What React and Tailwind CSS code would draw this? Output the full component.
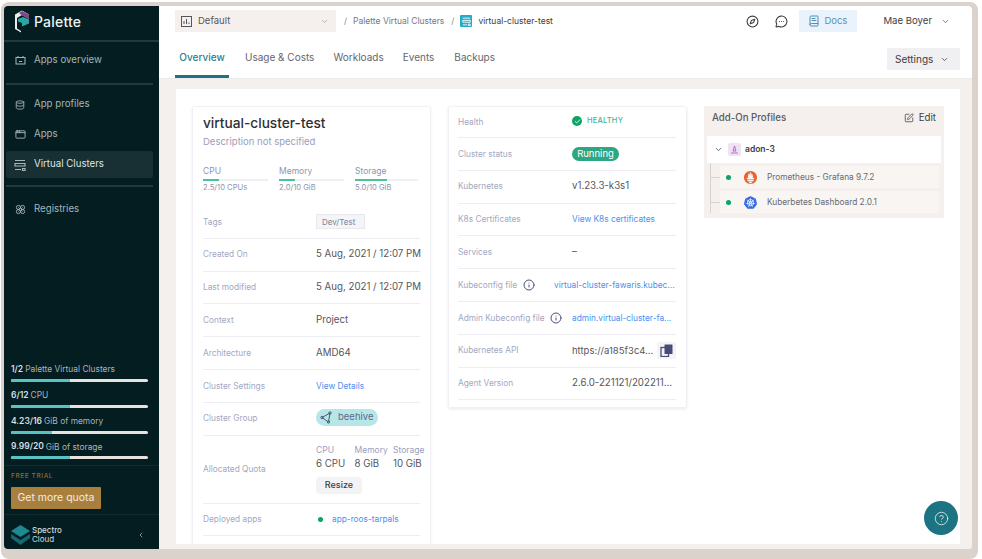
import React from "react";
import { ChevronDown, ChevronLeft, Compass, MessageCircleMore, BookText, SquarePen, Info, CircleHelp, Check, Database, AppWindow, Flower } from "lucide-react";
import { SiPrometheus, SiKubernetes } from "react-icons/si";

function Bar({ label, strong, pct }) {
  return (
    <div className="h-[25.7px] pl-[7px] pr-[11px]">
      <div className="h-[15px] flex items-center text-[8.4px] text-[#a9b4b6] whitespace-nowrap">
        <span className="font-semibold text-[#d9dfe0] mr-[2px] text-[8.5px]">{strong}</span>{label}
      </div>
      <div className="mt-[2px] h-[3px] rounded-full bg-[#e8e2df] overflow-hidden">
        <div className="h-full bg-[#59c3c3]" style={{ width: pct }} />
      </div>
    </div>
  );
}

function NavItem({ icon, label, active }) {
  return (
    <div className={`mx-[2px] w-[147px] h-[27px] flex items-center rounded-[2px] ${active ? "bg-[#182f33] text-[#dfe5e6]" : "text-[#a8b5b7]"}`}>
      <div className="w-[28px] flex justify-center text-[#a8b5b7]">{icon}</div>
      <span className="text-[9.7px] whitespace-nowrap">{label}</span>
    </div>
  );
}

function Row({ label, children, h = "h-[32.8px]", lw = "w-[113px]" }) {
  return (
    <div className={`${h} flex items-center border-b border-[#eeedf3]`}>
      <div className={`${lw} shrink-0 text-[8.3px] text-[#a2a8bf] whitespace-nowrap`}>{label}</div>
      <div className="min-w-0 flex-1 text-[9.7px] text-[#55565c] whitespace-nowrap">{children}</div>
    </div>
  );
}

function Usage({ label, value, pct, w }) {
  return (
    <div className={w}>
      <div className="text-[8.5px] leading-[10px] text-[#8f93ae]">{label}</div>
      <div className="mt-[3px] h-[2px] bg-[#f0f0f2]">
        <div className="h-full bg-[#48c597]" style={{ width: pct }} />
      </div>
      <div className="mt-[2px] text-[7.6px] leading-[10px] text-[#8f93ae] whitespace-nowrap">{value}</div>
    </div>
  );
}

function Logo() {
  return (
    <svg width="16" height="23" viewBox="0 0 16 23">
      <path d="M1 4.5 L8 0.5 L15 4.5 L15 9 L8 5 L3 8 L3 18.5 L7 21 L7 22.5 L1 19 Z" fill="#e9edee" />
      <path d="M5 3 L8 1 L15 4.5 L15 9 L8 5.5 Z" fill="#7b4a8c" />
      <path d="M4 9 L9 7 L15 9.5 L15 13.5 L8 16.5 L8 13 L4 11.5 Z" fill="#2fa3a3" />
    </svg>
  );
}

function SpectroLogo() {
  return (
    <svg width="19" height="20" viewBox="0 0 19 20">
      <path d="M9.5 0 L19 6 L9.5 12 L0 6 Z" fill="#1d8a92" />
      <path d="M0 9 L9.5 15 L19 9 L19 13 L9.5 20 L0 13 Z" fill="#14686f" />
    </svg>
  );
}

function ClusterIcon({ size = 12 }) {
  return (
    <svg width={size} height={size} viewBox="0 0 12 12" fill="none" stroke="currentColor" strokeWidth="1.2">
      <path d="M1 1.5 H11 M1 4.5 H11 V7 H1 Z M1 10.5 H7 M8.5 9.5 H11 V11.5 H8.5 Z" />
    </svg>
  );
}

function TvIcon() {
  return (
    <svg width="11" height="11" viewBox="0 0 11 11" fill="none" stroke="currentColor" strokeWidth="1">
      <rect x="1" y="2.5" width="9" height="6.5" /><path d="M3 2.5V1 M8 2.5V1 M4 6.5H7" />
    </svg>
  );
}

function CopyFilled() {
  return (
    <svg width="13" height="13" viewBox="0 0 13 13" fill="none">
      <rect x="1" y="3.5" width="7.5" height="9" fill="none" stroke="#4a4a78" strokeWidth="1.3" />
      <rect x="4.5" y="0.5" width="8" height="9.5" rx=".5" fill="#4a4a78" />
    </svg>
  );
}

export default function App() {
  return (
    <div className="w-[982px] h-[559px] bg-white overflow-hidden font-['Inter',sans-serif] pl-[1px] pt-[2px]">
      <div className="w-[977px] h-[557px] rounded-[8px] bg-[#dbd2cc] pl-[3px] pt-[4px]">
        <div className="w-[968px] h-[543px] rounded-[4px] bg-white flex overflow-hidden">
          {/* sidebar */}
          <aside className="w-[155px] shrink-0 bg-[#031d21] flex flex-col">
            <div className="h-[36px] flex items-center pl-[10px] pb-[4px] border-b-2 border-[#223a3d]">
              <Logo />
              <span className="ml-[4px] text-[14px] font-medium text-[#eef2f2] tracking-[0.2px]">Palette</span>
            </div>
            <div className="pt-[5px]">
              <NavItem label="Apps overview" icon={<TvIcon />} />
            </div>
            <div className="mt-[9px] mb-[6px] mx-[2px] w-[147px] h-[2px] bg-[#223a3d]" />
            <NavItem label="App profiles" icon={<Database size={10} />} />
            <div className="h-[3px]" />
            <NavItem label="Apps" icon={<AppWindow size={11} />} />
            <div className="h-[3px]" />
            <NavItem label="Virtual Clusters" active icon={<ClusterIcon />} />
            <div className="mt-[7px] mb-[9px] mx-[2px] w-[147px] h-[2px] bg-[#223a3d]" />
            <NavItem label="Registries" icon={<Flower size={11} />} />
            <div className="flex-1" />
            <div>
              <Bar strong="1/2" label="Palette Virtual Clusters" pct="43%" />
              <Bar strong="6/12" label="CPU" pct="43%" />
              <Bar strong="4.23/16" label="GiB of memory" pct="30%" />
              <Bar strong="9.99/20" label="GiB of storage" pct="43%" />
            </div>
            <div className="border-t border-[#12292d] pl-[7px]">
              <div className="pt-[6px] h-[21px] text-[6.5px] tracking-[0.6px] font-medium text-[#a0662a]">FREE TRIAL</div>
              <div className="w-[90px] h-[22px] flex items-center justify-center rounded-[1px] bg-[#a97f3d] text-[10.5px] text-[#f3ece0]">Get more quota</div>
            </div>
            <div className="mt-[5px] border-t border-[#12292d] h-[35px] pt-[6px] flex items-center pl-[7px] pr-[14px]">
              <SpectroLogo />
              <div className="ml-[2px] text-[8px] leading-[9.5px] text-[#d5dcdd]">
                <div className="font-medium">Spectro</div>
                <div>Cloud</div>
              </div>
              <ChevronLeft size={8} className="ml-auto text-[#c0c8c9]" />
            </div>
          </aside>
          {/* main */}
          <main className="flex-1 min-w-0 flex flex-col">
            <header className="h-[30px] flex items-center pl-[16px] pr-[22px] shrink-0">
              <div className="w-[161px] h-[22px] flex items-center bg-[#f5f0ee] px-[6px] text-[9.5px] text-[#55565c]">
                <svg width="11" height="11" viewBox="0 0 11 11" fill="none" stroke="#55565c" strokeWidth="1"><rect x="0.5" y="0.5" width="10" height="10" /><path d="M3 8V5 M5.5 8V3 M8 8V6.5" /></svg>
                <span className="ml-[6px]">Default</span>
                <ChevronDown size={9} className="ml-auto mr-[1px] text-[#a5a5a8]" />
              </div>
              <span className="ml-[8px] text-[8.5px] text-[#8a8a90]">/</span>
              <span className="ml-[6px] text-[8.5px] text-[#77777d]">Palette Virtual Clusters</span>
              <span className="ml-[7px] text-[8.5px] text-[#8a8a90]">/</span>
              <div className="ml-[6px] w-[12px] h-[12px] rounded-[1px] bg-[#25a9c9] flex items-center justify-center text-white"><ClusterIcon size={9} /></div>
              <span className="ml-[6px] text-[8.5px] text-[#3d3d42]">virtual-cluster-test</span>
              <Compass size={13} className="ml-auto text-[#3d3d42]" />
              <MessageCircleMore size={13} className="ml-[16px] text-[#3d3d42]" />
              <div className="ml-[11px] w-[58px] h-[22px] bg-[#eaf2fb] flex items-center pl-[9px] text-[9.5px] text-[#5a93b5]">
                <BookText size={12} className="text-[#4f8fb2]" />
                <span className="ml-[4px]">Docs</span>
              </div>
              <span className="ml-[26px] text-[9.6px] text-[#3d3d42]">Mae Boyer</span>
              <ChevronDown size={9} className="ml-[9px] text-[#55565c]" />
            </header>
            <div className="h-[43px] shrink-0 flex items-end pl-[16px] pr-[12px] border-b border-[#eeeae7] text-[10px] text-[#66666c]">
              <div className="w-[54px] h-[38px] flex items-center justify-center border-b-[3px] border-[#1d7180] text-[#2e7f8d] font-medium">Overview</div>
              <div className="ml-[16px] h-[38px] flex items-center pb-[3px]">Usage &amp; Costs</div>
              <div className="ml-[19px] h-[38px] flex items-center pb-[3px]">Workloads</div>
              <div className="ml-[19px] h-[38px] flex items-center pb-[3px]">Events</div>
              <div className="ml-[20px] h-[38px] flex items-center pb-[3px]">Backups</div>
              <div className="ml-auto self-start mt-[12px] w-[73px] h-[22px] bg-[#f0eff2] flex items-center pl-[8px] text-[10px] text-[#3d3d42]">
                Settings
                <ChevronDown size={9} className="ml-[7px]" />
              </div>
            </div>
            <div className="flex-1 min-h-0 bg-[#f4f0ee] pl-[17px] pr-[12px] pt-[10px] pb-[5px]">
              <div className="h-full bg-white relative flex items-start gap-[17px] pl-[16px] pt-[17px] overflow-hidden">
                {/* card 1 */}
                <section className="w-[239px] h-[460px] shrink-0 rounded-[2px] border border-[#f0f0f6] shadow-[0_1px_3px_rgba(40,40,90,0.08)] pl-[10px] pr-[10px] pt-[8px]">
                  <div className="text-[13.7px] leading-[17px] font-medium text-[#2f2f33] whitespace-nowrap">virtual-cluster-test</div>
                  <div className="mt-[4px] text-[9.5px] leading-[12px] text-[#9a9dbb]">Description not specified</div>
                  <div className="mt-[18px] flex">
                    <Usage label="CPU" value="2.5/10 CPUs" pct="25%" w="w-[65px] mr-[11px]" />
                    <Usage label="Memory" value="2.0/10 GiB" pct="25%" w="w-[65px] mr-[11px]" />
                    <Usage label="Storage" value="5.0/10 GiB" pct="50%" w="w-[63px]" />
                  </div>
                  <div className="mt-[13px]">
                    <Row label="Tags">
                      <span className="inline-flex w-[49px] h-[15px] items-center pl-[5px] bg-[#f5f5f8] border border-[#e8e8ee] text-[8px] text-[#7d8096]">Dev/Test</span>
                    </Row>
                    <Row label="Created On">5 Aug, 2021 / 12:07 PM</Row>
                    <Row label="Last modified">5 Aug, 2021 / 12:07 PM</Row>
                    <Row label="Context">Project</Row>
                    <Row label="Architecture">AMD64</Row>
                    <Row label="Cluster Settings"><span className="text-[#4b8ff0] text-[8.3px]">View Details</span></Row>
                    <Row label="Cluster Group">
                      <span className="inline-flex items-center w-[62px] h-[17px] rounded-full bg-[#b7e6e6] pl-[4px] text-[9.5px] text-[#5d6a8a]">
                        <svg width="13" height="13" viewBox="0 0 13 13" fill="none" stroke="#4d5a80" strokeWidth="1"><path d="M2 6.5 L10 2 L8.5 11 Z" /><circle cx="2" cy="6.5" r="1.2" /><circle cx="10" cy="2" r="1.2" /><circle cx="8.5" cy="11" r="1.2" /></svg>
                        <span className="ml-[5px]">beehive</span>
                      </span>
                    </Row>
                    <Row label="Allocated Quota" h="h-[68px]">
                      <div className="flex text-[8.5px] leading-[11px] text-[#9a9dbb]">
                        <span className="w-[38.5px] shrink-0">CPU</span><span className="w-[38.5px] shrink-0">Memory</span><span className="shrink-0">Storage</span>
                      </div>
                      <div className="mt-[2px] flex text-[9.7px] leading-[12px] text-[#55565c]">
                        <span className="w-[38.5px] shrink-0">6 CPU</span><span className="w-[38.5px] shrink-0">8 GiB</span><span className="shrink-0">10 GiB</span>
                      </div>
                      <div className="mt-[7px] w-[46px] h-[17px] rounded-[4px] bg-[#f3f2f5] flex items-center justify-center text-[9px] font-medium text-[#3d3d42]">Resize</div>
                    </Row>
                    <Row label="Deployed apps">
                      <span className="inline-flex items-center text-[8.3px] text-[#4b8ff0]">
                        <span className="ml-[2px] w-[5px] h-[5px] rounded-full bg-[#0ba463]" />
                        <span className="ml-[9px]">app-roos-tarpals</span>
                      </span>
                    </Row>
                  </div>
                </section>
                {/* card 2 */}
                <section className="w-[239px] h-[302px] shrink-0 rounded-[2px] border border-[#f0f0f6] shadow-[0_1px_3px_rgba(40,40,90,0.1)] pl-[9px] pr-[10px]">
                  <Row label="Health" h="h-[31px]" lw="w-[114px]">
                    <span className="inline-flex items-center text-[7.5px] font-medium tracking-[0.2px] text-[#4bb398]">
                      <span className="w-[10px] h-[10px] rounded-full bg-[#0ba463] flex items-center justify-center text-white"><Check size={7} strokeWidth={3} /></span>
                      <span className="ml-[5px] -mt-[2px]">HEALTHY</span>
                    </span>
                  </Row>
                  <Row label="Cluster status" lw="w-[114px]">
                    <span className="inline-flex items-center justify-center w-[47px] h-[14px] rounded-full bg-[#2ea583] text-[9.5px] text-white">Running</span>
                  </Row>
                  <Row label="Kubernetes" lw="w-[114px]">v1.23.3-k3s1</Row>
                  <Row label="K8s Certificates" lw="w-[114px]"><span className="text-[#4b8ff0] text-[8.3px]">View K8s certificates</span></Row>
                  <Row label="Services" lw="w-[114px]">–</Row>
                  <Row label={<span className="inline-flex items-center">Kubeconfig file<Info size={12} className="ml-[6px] text-[#4d4d80]" /></span>} lw="w-[96px]">
                    <span className="text-[#4b8ff0] text-[8.3px]">virtual-cluster-fawaris.kubec...</span>
                  </Row>
                  <Row label={<span className="inline-flex items-center">Admin Kubeconfig file<Info size={12} className="ml-[6px] text-[#4d4d80]" /></span>} lw="w-[114px]">
                    <span className="text-[#4b8ff0] text-[8.3px]">admin.virtual-cluster-fa...</span>
                  </Row>
                  <Row label="Kubernetes API" lw="w-[114px]">
                    <span className="flex items-center">
                      <span className="text-[9.5px] w-[87px]">https://a185f3c4...</span>
                      <span className="w-[20px] h-[17px] bg-[#f4f4f7] flex items-center justify-center"><CopyFilled /></span>
                    </span>
                  </Row>
                  <Row label="Agent Version" lw="w-[114px]">2.6.0-221121/202211...</Row>
                </section>
                {/* card 3 */}
                <section className="w-[240px] h-[112px] shrink-0 bg-[#f5f0ed] rounded-[1px] px-[3px]">
                  <div className="h-[30px] flex items-center pb-[6px] pl-[5px] pr-[5px] text-[9.7px] text-[#55565c]">
                    <span className="font-medium text-[#5a5a60]">Add-On Profiles</span>
                    <SquarePen size={10} className="ml-auto text-[#4d4d52]" />
                    <span className="ml-[5px] text-[#3d3d42]">Edit</span>
                  </div>
                  <div className="h-[27px] bg-white flex items-center pl-[7px] text-[8.5px] font-semibold text-[#3d3d42]">
                    <ChevronDown size={9} />
                    <span className="ml-[5px] w-[13px] h-[13px] rounded-[2px] bg-[#efe3f3] flex items-center justify-center">
                      <svg width="9" height="9" viewBox="0 0 9 9" fill="none" stroke="#9b59b6" strokeWidth=".8"><path d="M4.5 1 L3 6 H6 Z M1 8 H8" /></svg>
                    </span>
                    <span className="ml-[4px]">adon-3</span>
                  </div>
                  <div className="border-l border-[#d8d2cd] ml-[3px] pt-[3px] pr-[2px] flex flex-col gap-[3px]">
                    {[["Prometheus - Grafana 9.7.2", <SiPrometheus size={13} color="#e6622e" />], ["Kuberbetes Dashboard 2.0.1", <SiKubernetes size={13} color="#326ce5" />]].map(([name, icon]) => (
                      <div key={name} className="flex items-center h-[22px]">
                        <div className="w-[9px] h-px bg-[#d8d2cd] shrink-0" />
                        <div className="flex-1 h-[22px] bg-[#f8f5f3] flex items-center pl-[6px] text-[8.3px] text-[#6a6a70] whitespace-nowrap">
                          <span className="w-[5px] h-[5px] rounded-full bg-[#0ba463]" />
                          <span className="ml-[13px] w-[13px] h-[13px] flex items-center justify-center">{icon}</span>
                          <span className="ml-[10px]">{name}</span>
                        </div>
                      </div>
                    ))}
                  </div>
                </section>
                <div className="absolute right-[2px] bottom-[9px] w-[34px] h-[34px] rounded-full bg-[#1c7482] flex items-center justify-center text-[#e6f0f2]">
                  <CircleHelp size={15} strokeWidth={1.3} />
                </div>
              </div>
            </div>
          </main>
        </div>
      </div>
    </div>
  );
}
